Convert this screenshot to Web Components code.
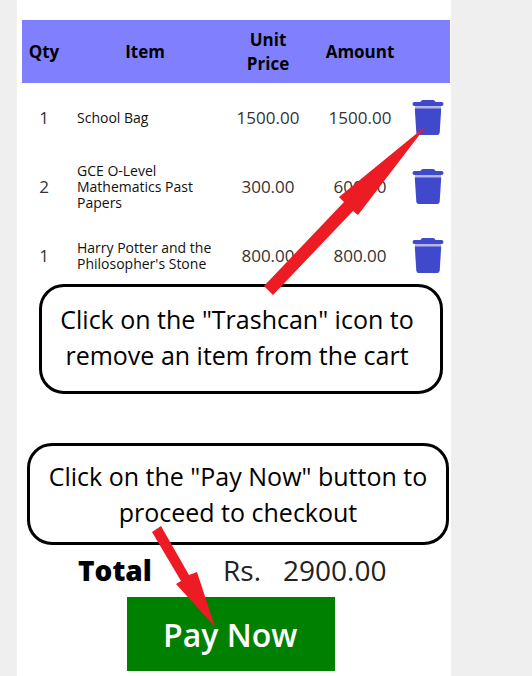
<!DOCTYPE html>
<html lang="en">
<head>
<meta charset="utf-8">
<meta name="viewport" content="width=device-width, initial-scale=1">
<title>Shopping cart</title>
<style>
  body { margin: 0; background: #efefef; font-family: "Open Sans", "Noto Sans", sans-serif; color: #000; }
</style>
</head>
<body>
<cart-page>
  <cart-table></cart-table>
  <cart-total label="Total" currency="Rs." amount="2900.00"></cart-total>
  <pay-button>Pay Now</pay-button>
  <help-callout slot="notes" class="remove">Click on the "Trashcan" icon to remove an item from the cart</help-callout>
  <help-callout slot="notes" class="pay">Click on the "Pay Now" button to proceed to checkout</help-callout>
  <help-arrow slot="notes" points="427,125 358,215 353,211 273,295 264,286 344,202 339,197"></help-arrow>
  <help-arrow slot="notes" points="215,627 176,584 181,581 152,532 161,526 189,575 197,572"></help-arrow>
</cart-page>

<script>
class CartPage extends HTMLElement {
  constructor() {
    super();
    this.attachShadow({ mode: 'open' }).innerHTML = `
      <style>
        :host { display: block; position: relative; padding: 0 81px 0 17px; }
        main { display: flex; flex-direction: column; background: #fff; min-height: 100vh; box-sizing: border-box; padding: 20px 1px 5px 5px; }
        ::slotted(help-callout) { position: absolute; box-sizing: border-box; }
        ::slotted(.remove) { top: 284px; left: 39px; right: 89px; height: 110px; padding: 0 8px 4px 0; }
        ::slotted(.pay) { top: 443px; left: 27px; right: 83px; height: 102px; }
        ::slotted(help-arrow) { position: absolute; inset: 0; pointer-events: none; }
      </style>
      <main><slot></slot></main>
      <slot name="notes"></slot>`;
  }
}

class TrashButton extends HTMLElement {
  constructor() {
    super();
    this.attachShadow({ mode: 'open' }).innerHTML = `
      <style>
        :host { display: block; }
        button { display: block; padding: 0; border: 0; background: none; cursor: pointer; }
        svg { display: block; }
      </style>
      <button type="button" aria-label="Remove item">
        <svg width="32" height="38" viewBox="0 0 32 38" aria-hidden="true">
          <path fill="#b4b6ec" d="M3 7h26v3H3z"/>
          <path fill="#4048cc" d="M8.500 3Q9 1 11 1h10q2 0 2.500 2H29.500a2 2 0 0 1 0 4H2.500a2 2 0 0 1 0-4z"/>
          <path fill="#4048cc" d="M2.800 9.500h26.400l-1.500 24q-.2 2.500-2.500 2.500H6.800q-2.300 0-2.500-2.500z"/>
        </svg>
      </button>`;
  }
}

class CartTable extends HTMLElement {
  constructor() {
    super();
    const items = [
      [1, 'School Bag', '1500.00', '1500.00'],
      [2, 'GCE O-Level Mathematics Past Papers', '300.00', '600.00'],
      [1, "Harry Potter and the Philosopher's Stone", '800.00', '800.00']
    ];
    this.attachShadow({ mode: 'open' }).innerHTML = `
      <style>
        :host { display: block; }
        table { width: 100%; table-layout: fixed; border-collapse: collapse; }
        th, td { padding: 0; text-align: center; vertical-align: middle; }
        th { height: 63px; background: #8080ff; font-size: 17px; line-height: 24px; font-weight: 700; }
        td { height: 69px; font-size: 17px; line-height: 24px; color: #333; }
        td.name { padding: 0 11px; text-align: left; font-size: 14px; line-height: 16px; color: #111; }
        .qty { width: 44px; } .unit { width: 88px; } .amount { width: 96px; } .remove { width: 42px; }
        th.unit { padding: 0 20px; box-sizing: border-box; }
        td:last-child { padding-left: 4px; }
      </style>
      <table>
        <colgroup><col class="qty"><col><col class="unit"><col class="amount"><col class="remove"></colgroup>
        <thead><tr><th>Qty</th><th>Item</th><th class="unit">Unit Price</th><th>Amount</th><th></th></tr></thead>
        <tbody>${items.map(([q, n, u, a]) => `<tr><td>${q}</td><td class="name">${n}</td><td>${u}</td><td>${a}</td><td><trash-button></trash-button></td></tr>`).join('')}</tbody>
      </table>`;
  }
}

class CartTotal extends HTMLElement {
  connectedCallback() {
    if (this.shadowRoot) return;
    this.attachShadow({ mode: 'open' }).innerHTML = `
      <style>
        :host { display: flex; align-items: baseline; margin-top: 258px; padding-left: 56px; font-size: 28px; line-height: 44px; color: #222; }
        b { flex: 0 0 145px; font-weight: 800; color: #000; }
        .currency { flex: 0 0 60px; }
      </style>
      <b>${this.getAttribute('label')}</b>
      <span class="currency">${this.getAttribute('currency')}</span>
      <span>${this.getAttribute('amount')}</span>`;
  }
}

class PayButton extends HTMLElement {
  constructor() {
    super();
    this.attachShadow({ mode: 'open' }).innerHTML = `
      <style>
        :host { display: block; margin-top: 5px; padding-left: 105px; }
        button { padding: 17px 38px 15px 36px; min-width: 208px; border: 0; background: #008000; color: #fff; font-family: inherit; font-size: 32px; line-height: 42px; font-weight: 600; cursor: pointer; }
      </style>
      <button type="button"><slot></slot></button>`;
  }
}

class HelpCallout extends HTMLElement {
  constructor() {
    super();
    this.attachShadow({ mode: 'open' }).innerHTML = `
      <style>
        :host { display: flex; align-items: center; border: 3px solid #000; border-radius: 25px; background: #fff; }
        p { margin: 0; padding: 0 8px; flex: 1; text-align: center; font-size: 25px; line-height: 36px; }
      </style>
      <p><slot></slot></p>`;
  }
}

class HelpArrow extends HTMLElement {
  connectedCallback() {
    if (this.shadowRoot) return;
    this.attachShadow({ mode: 'open' }).innerHTML = `
      <style>
        :host { display: block; }
        svg { display: block; width: 100%; height: 100%; }
      </style>
      <svg aria-hidden="true"><polygon fill="#ed1c24" points="${this.getAttribute('points')}"/></svg>`;
  }
}

customElements.define('cart-page', CartPage);
customElements.define('trash-button', TrashButton);
customElements.define('cart-table', CartTable);
customElements.define('cart-total', CartTotal);
customElements.define('pay-button', PayButton);
customElements.define('help-callout', HelpCallout);
customElements.define('help-arrow', HelpArrow);
</script>
</body>
</html>
